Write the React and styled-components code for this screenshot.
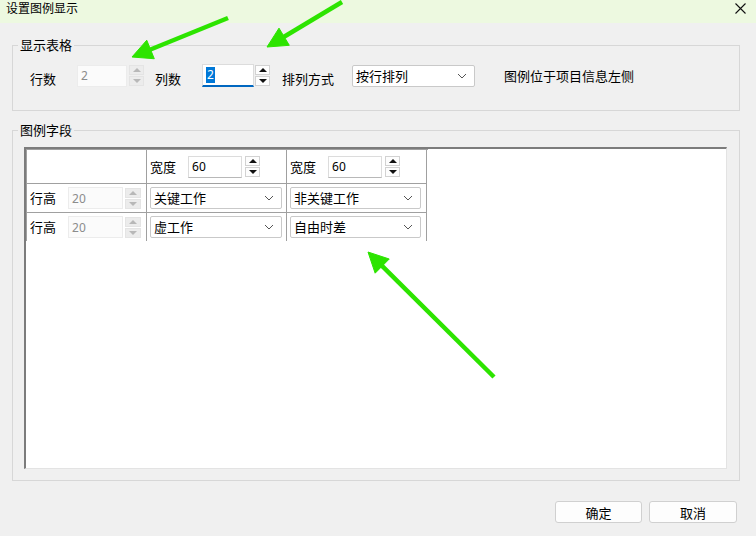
import React from 'react';
import styled, { createGlobalStyle } from 'styled-components';

const GlobalStyle = createGlobalStyle`
  html, body {
    margin: 0;
    padding: 0;
    background: #f0f0f0;
  }
  body {
    font-family: "Noto Sans CJK SC", "Noto Sans", sans-serif;
    font-size: 13px;
    color: #000;
  }
`;

const Dialog = styled.div`
  position: relative;
  width: 756px;
  height: 536px;
  background: #f0f0f0;
  overflow: hidden;
  display: flex;
  flex-direction: column;
`;

const TitleBar = styled.div`
  height: 23px;
  flex: none;
  background: #edf9e0;
  display: flex;
  align-items: flex-start;
  justify-content: space-between;
  padding: 0 10px 0 6px;
  box-sizing: border-box;
`;

const Title = styled.span`
  font-size: 12px;
  line-height: 16px;
`;

const CloseIcon = styled.svg`
  margin-top: 3px;
`;

const Body = styled.div`
  padding: 14px 16px 0 12px;
  display: flex;
  flex-direction: column;
`;

const Group = styled.fieldset`
  margin: ${({ $mt }) => $mt}px 0 0 0;
  padding: 0 0 ${({ $pb }) => $pb}px 0;
  border: 1px solid #d7d7d7;
  min-width: 0;
`;

const Legend = styled.legend`
  margin-left: 5px;
  padding: 0 2px;
  font-size: 13px;
  line-height: 16px;
`;

const TopRow = styled.div`
  display: flex;
  align-items: center;
  height: 23px;
  margin-top: 11px;
  padding-left: 17px;
`;

const Label = styled.span`
  flex: none;
  font-size: 13px;
  line-height: 16px;
  margin-left: ${({ $ml = 0 }) => $ml}px;
  padding-top: ${({ $dy = 0 }) => $dy}px;
  white-space: nowrap;
`;

const SpinWrap = styled.div`
  display: flex;
  align-items: center;
  flex: none;
  margin-left: ${({ $ml = 0 }) => $ml}px;
`;

const NumInput = styled.div`
  width: ${({ $w }) => $w}px;
  height: ${({ $focused }) => ($focused ? 23 : 22)}px;
  box-sizing: border-box;
  background: ${({ $disabled }) => ($disabled ? '#fbfbfb' : '#fff')};
  border: 1px solid ${({ $disabled }) => ($disabled ? '#ececec' : '#dcdcdc')};
  border-bottom: ${({ $focused, $disabled }) =>
    $focused ? '2px solid #0067c0' : `1px solid ${$disabled ? '#ececec' : '#b8b8b8'}`};
  display: flex;
  align-items: center;
  padding-left: 3px;
  font-family: "Noto Sans", "Open Sans", sans-serif;
  font-size: 12px;
  color: ${({ $disabled }) => ($disabled ? '#8c8c8c' : '#000')};
`;

const Selected = styled.span`
  background: #0078d7;
  color: #fff;
  line-height: 16px;
  padding: 0 1px;
`;

const SpinCol = styled.div`
  display: flex;
  flex-direction: column;
  gap: 1px;
  margin-left: ${({ $gap }) => $gap}px;
`;

const SpinBtn = styled.div`
  width: ${({ $w }) => $w}px;
  height: 10px;
  box-sizing: border-box;
  border: 1px solid ${({ $disabled }) => ($disabled ? '#e4e4e4' : '#d2d2d2')};
  background: ${({ $disabled }) => ($disabled ? '#ececec' : '#fdfdfd')};
  display: flex;
  align-items: center;
  justify-content: center;
  &::after {
    content: '';
    width: 0;
    height: 0;
    border-left: 4px solid transparent;
    border-right: 4px solid transparent;
    ${({ $down, $disabled }) =>
      $down
        ? `border-top: 4px solid ${$disabled ? '#b8b8b8' : '#111'};`
        : `border-bottom: 4px solid ${$disabled ? '#b8b8b8' : '#111'};`}
  }
`;

const SelectBox = styled.div`
  flex: none;
  width: ${({ $w }) => $w}px;
  height: 22px;
  box-sizing: border-box;
  margin-left: ${({ $ml = 0 }) => $ml}px;
  background: #fff;
  border: 1px solid #c9c9c9;
  border-radius: 2px;
  display: flex;
  align-items: center;
  justify-content: space-between;
  padding: 0 7px 0 3px;
  font-size: 13px;
  line-height: 16px;
`;

const GridFrame = styled.div`
  margin: 9px 12px 0 11px;
  height: 322px;
  box-sizing: border-box;
  background: #fff;
  border-style: solid;
  border-width: 2px 1px 1px 2px;
  border-color: #7c7c7c #e3e3e3 #e3e3e3 #7c7c7c;
`;

const Table = styled.div`
  display: grid;
  grid-template-columns: 120px 140px 140px;
  width: 401px;
  border-top: 1px solid #a0a0a0;
  border-left: 1px solid #a0a0a0;
`;

const Cell = styled.div`
  height: ${({ $h }) => $h}px;
  box-sizing: border-box;
  border-right: 1px solid #a0a0a0;
  border-bottom: ${({ $last }) => ($last ? 'none' : '1px solid #a0a0a0')};
  display: flex;
  align-items: center;
  padding-left: 3px;
`;

const Footer = styled.div`
  display: flex;
  justify-content: flex-end;
  gap: 7px;
  margin-top: 20px;
  padding-right: 3px;
`;

const Button = styled.button`
  width: ${({ $w }) => $w}px;
  height: 22px;
  background: #fdfdfd;
  border: 1px solid #d0d0d0;
  border-radius: 3px;
  font-family: "Noto Sans CJK SC", sans-serif;
  font-size: 13px;
  color: #000;
  padding: 0;
`;

const Overlay = styled.svg`
  position: absolute;
  left: 0;
  top: 0;
  pointer-events: none;
`;

const Chevron = () => (
  <svg width="10" height="6" viewBox="0 0 10 6">
    <path d="M1 1 L5 5 L9 1" fill="none" stroke="#555" strokeWidth="1" />
  </svg>
);

const Spinner = ({ value, w, ml, disabled, focused, gap = 2, sw = 15 }) => (
  <SpinWrap $ml={ml}>
    <NumInput $w={w} $disabled={disabled} $focused={focused}>
      {focused ? <Selected>{value}</Selected> : value}
    </NumInput>
    <SpinCol $gap={gap}>
      <SpinBtn $w={sw} $disabled={disabled} />
      <SpinBtn $w={sw} $disabled={disabled} $down />
    </SpinCol>
  </SpinWrap>
);

const Select = ({ text, w, ml }) => (
  <SelectBox $w={w} $ml={ml}>
    <span>{text}</span>
    <Chevron />
  </SelectBox>
);

const arrows = [
  { t: [228, 18], p: [132, 57] },
  { t: [342, 2], p: [267, 47] },
  { t: [494, 377], p: [368, 252] },
];

const Arrow = ({ t, p }) => {
  const dx = p[0] - t[0];
  const dy = p[1] - t[1];
  const len = Math.hypot(dx, dy);
  const ux = dx / len;
  const uy = dy / len;
  const bx = p[0] - ux * 20;
  const by = p[1] - uy * 20;
  const nx = -uy * 10;
  const ny = ux * 10;
  return (
    <g fill="#2de400" stroke="#2de400">
      <line x1={t[0]} y1={t[1]} x2={bx + ux * 2} y2={by + uy * 2} strokeWidth="4.5" />
      <polygon points={`${p[0]},${p[1]} ${bx + nx},${by + ny} ${bx - nx},${by - ny}`} strokeWidth="1" />
    </g>
  );
};

const rows = [
  { first: '关键工作', second: '非关键工作', h: 29 },
  { first: '虚工作', second: '自由时差', h: 28, last: true },
];

export default function App() {
  return (
    <>
      <GlobalStyle />
      <Dialog>
        <TitleBar>
          <Title>设置图例显示</Title>
          <CloseIcon width="11" height="11" viewBox="0 0 11 11">
            <path d="M0.5 0.5 L10.5 10.5 M10.5 0.5 L0.5 10.5" stroke="#111" strokeWidth="1.1" />
          </CloseIcon>
        </TitleBar>
        <Body>
          <Group $mt={0} $pb={23}>
            <Legend>显示表格</Legend>
            <TopRow>
              <Label $dy={6}>行数</Label>
              <Spinner value="2" w={50} ml={21} disabled />
              <Label $ml={11} $dy={6}>列数</Label>
              <Spinner value="2" w={52} ml={21} gap={1} focused />
              <Label $ml={12} $dy={6}>排列方式</Label>
              <Select text="按行排列" w={123} ml={18} />
              <Label $ml={29}>图例位于项目信息左侧</Label>
            </TopRow>
          </Group>
          <Group $mt={11} $pb={11}>
            <Legend>图例字段</Legend>
            <GridFrame>
              <Table>
                <Cell $h={34} />
                <Cell $h={34}>
                  <Label>宽度</Label>
                  <Spinner value="60" w={54} ml={12} gap={3} />
                </Cell>
                <Cell $h={34}>
                  <Label>宽度</Label>
                  <Spinner value="60" w={54} ml={12} gap={3} />
                </Cell>
                {rows.map((r) => (
                  <React.Fragment key={r.first}>
                    <Cell $h={r.h} $last={r.last}>
                      <Label>行高</Label>
                      <Spinner value="20" w={55} ml={12} disabled sw={16} />
                    </Cell>
                    <Cell $h={r.h} $last={r.last}>
                      <Select text={r.first} w={132} />
                    </Cell>
                    <Cell $h={r.h} $last={r.last}>
                      <Select text={r.second} w={131} />
                    </Cell>
                  </React.Fragment>
                ))}
              </Table>
            </GridFrame>
          </Group>
          <Footer>
            <Button $w={87}>确定</Button>
            <Button $w={88}>取消</Button>
          </Footer>
        </Body>
        <Overlay width="756" height="536" viewBox="0 0 756 536">
          {arrows.map((a, i) => (
            <Arrow key={i} {...a} />
          ))}
        </Overlay>
      </Dialog>
    </>
  );
}
